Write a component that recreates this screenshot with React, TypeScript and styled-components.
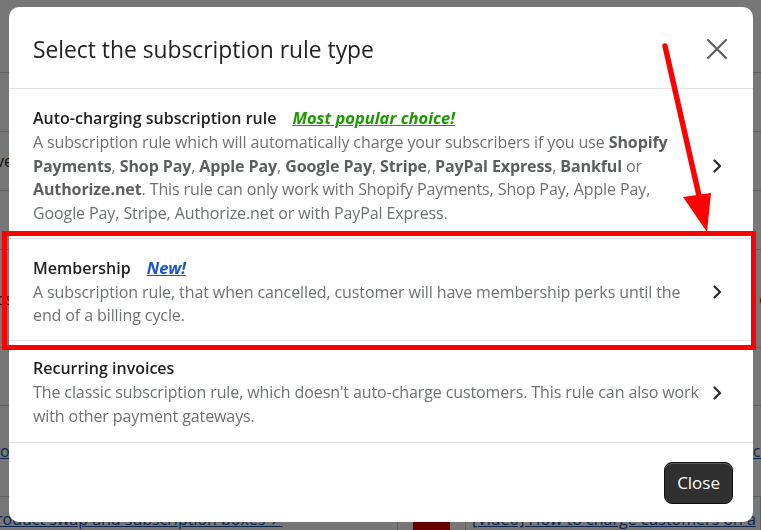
import React from "react";
import styled, { createGlobalStyle } from "styled-components";

const GlobalStyle = createGlobalStyle`
  html, body {
    margin: 0;
    padding: 0;
  }
  body {
    font-family: "Open Sans", "Noto Sans", Arial, sans-serif;
    -webkit-font-smoothing: antialiased;
  }
`;

interface Rule {
  title: string;
  tag?: { text: string; tone: "green" | "blue" };
  body: React.ReactNode;
}

const rules: Rule[] = [
  {
    title: "Auto-charging subscription rule",
    tag: { text: "Most popular choice!", tone: "green" },
    body: (
      <>
        A subscription rule which will automatically charge your subscribers if
        you use <b>Shopify Payments</b>, <b>Shop Pay</b>, <b>Apple Pay</b>,{" "}
        <b>Google Pay</b>, <b>Stripe</b>, <b>PayPal Express</b>,{" "}
        <b>Bankful</b> or <b>Authorize.net</b>. This rule can only work with
        Shopify Payments, Shop Pay, Apple Pay, Google Pay, Stripe,
        Authorize.net or with PayPal Express.
      </>
    ),
  },
  {
    title: "Membership",
    tag: { text: "New!", tone: "blue" },
    body: (
      <>
        A subscription rule, that when cancelled, customer will have membership
        perks until the end of a billing cycle.
      </>
    ),
  },
  {
    title: "Recurring invoices",
    body: (
      <>
        The classic subscription rule, which doesn't auto-charge customers.
        This rule can also work with other payment gateways.
      </>
    ),
  },
];

const ChevronIcon = () => (
  <svg width="12" height="16" viewBox="0 0 12 16" fill="none">
    <path
      d="M3.5 2.5 L9 8 L3.5 13.5"
      stroke="#303030"
      strokeWidth="2.4"
      strokeLinecap="round"
      strokeLinejoin="round"
    />
  </svg>
);

const CloseIcon = () => (
  <svg width="22" height="22" viewBox="0 0 22 22" fill="none">
    <path
      d="M2 2 L20 20 M20 2 L2 20"
      stroke="#5c5f62"
      strokeWidth="2.2"
      strokeLinecap="round"
    />
  </svg>
);

const App = () => {
  return (
    <>
      <GlobalStyle />
      <Page>
        <PageRow $h={72} />
        <PageRow $h={58} />
        <PageRow $h={58}>
          <PageText>ve</PageText>
        </PageRow>
        <PageRow $h={58} />
        <PageRow $h={97}>
          <PageText>os</PageText>
          <PageSide>c</PageSide>
        </PageRow>
        <PageRow $h={57} />
        <PageRow $h={90}>
          <PageLink>ow</PageLink>
          <PageSide>
            <PageLink>cr</PageLink>
          </PageSide>
        </PageRow>
        <PageFooter>
          <FooterCell>
            <PageLink>roduct swap and subscription boxes ↗</PageLink>
          </FooterCell>
          <FooterCell $center>
            <VideoThumb />
          </FooterCell>
          <FooterCell>
            <PageLink>[Video] How to charge customers on a</PageLink>
          </FooterCell>
        </PageFooter>
      </Page>

      <Overlay>
        <Modal>
          <Header>
            <Title>Select the subscription rule type</Title>
            <IconButton aria-label="Close">
              <CloseIcon />
            </IconButton>
          </Header>

          <List>
            {rules.map((rule) => (
              <Item key={rule.title}>
                <ItemText>
                  <ItemTitle>
                    {rule.title}
                    {rule.tag && (
                      <Tag $tone={rule.tag.tone}>{rule.tag.text}</Tag>
                    )}
                  </ItemTitle>
                  <ItemBody>{rule.body}</ItemBody>
                </ItemText>
                <Chevron>
                  <ChevronIcon />
                </Chevron>
              </Item>
            ))}
          </List>

          <Footer>
            <CloseButton>Close</CloseButton>
          </Footer>
        </Modal>
      </Overlay>

      <Annotation width="761" height="530" viewBox="0 0 761 530">
        <rect
          x="4.5"
          y="233.5"
          width="749"
          height="114"
          fill="none"
          stroke="#ff0000"
          strokeWidth="5"
        />
        <line
          x1="665"
          y1="46"
          x2="700"
          y2="200"
          stroke="#ff0000"
          strokeWidth="5.5"
          strokeLinecap="round"
        />
        <polygon points="683,197 711,193 707,232" fill="#ff0000" />
      </Annotation>
    </>
  );
};

export default App;

const Page = styled.div`
  width: 761px;
  height: 530px;
  overflow: hidden;
  background: #ffffff;
  display: flex;
  flex-direction: column;
`;

const PageRow = styled.div<{ $h: number }>`
  height: ${(p) => p.$h}px;
  flex: none;
  border-bottom: 1px solid #c9cccf;
  display: flex;
  align-items: center;
  font-size: 16px;
  color: #202223;
`;

const PageText = styled.span`
  margin-left: -4px;
`;

const PageSide = styled.span`
  margin-left: auto;
  margin-right: -6px;
`;

const PageLink = styled.span`
  color: #1f4fa8;
  text-decoration: underline;
  font-size: 16px;
  white-space: nowrap;
`;

const PageFooter = styled.div`
  flex: 1;
  display: grid;
  grid-template-columns: 408px 68px 1fr;
  margin-left: -10px;
`;

const FooterCell = styled.div<{ $center?: boolean }>`
  display: flex;
  align-items: flex-end;
  justify-content: ${(p) => (p.$center ? "center" : "flex-start")};
  padding: 0 6px;
  border-right: 1px solid #c9cccf;
  overflow: hidden;
`;

const VideoThumb = styled.div`
  width: 37px;
  height: 26px;
  background: #e00000;
  flex: none;
  margin-bottom: -6px;
`;

const Overlay = styled.div`
  position: fixed;
  inset: 0;
  background: rgba(0, 0, 0, 0.535);
  display: flex;
  padding: 7px 8px 8px 9px;
  box-sizing: border-box;
`;

const Modal = styled.div`
  flex: 1;
  background: #ffffff;
  border-radius: 10px;
  display: flex;
  flex-direction: column;
  overflow: hidden;
`;

const Header = styled.div`
  height: 82px;
  flex: none;
  box-sizing: border-box;
  display: flex;
  align-items: center;
  justify-content: space-between;
  padding: 3px 25px 0 24px;
  border-bottom: 1px solid #e1e3e5;
`;

const Title = styled.h2`
  margin: 0;
  font-size: 22.8px;
  font-weight: 400;
  color: #202223;
`;

const IconButton = styled.button`
  border: none;
  background: transparent;
  padding: 0;
  display: flex;
  cursor: pointer;
`;

const List = styled.div`
  display: flex;
  flex-direction: column;
`;

const Item = styled.div`
  display: flex;
  align-items: center;
  gap: 7px;
  padding: 18px 30px 12px 24px;
  border-bottom: 1px solid #e1e3e5;
  cursor: pointer;

  &:last-child {
    padding-top: 16px;
    padding-bottom: 14px;
  }
`;

const ItemText = styled.div`
  flex: 1;
  font-size: 16px;
  line-height: 23.75px;
`;

const ItemTitle = styled.div`
  font-weight: 600;
  color: #202223;
  height: 23.75px;
`;

const Tag = styled.a<{ $tone: "green" | "blue" }>`
  margin-left: 16px;
  font-size: 16.5px;
  line-height: 1;
  font-style: italic;
  font-weight: 700;
  text-decoration: underline;
  color: ${(p) => (p.$tone === "green" ? "#1d9a00" : "#1a55c7")};
`;

const ItemBody = styled.div`
  color: #6d7175;
  letter-spacing: -0.1px;

  b {
    font-weight: 700;
    color: #5c5f62;
  }
`;

const Chevron = styled.div`
  flex: none;
  display: flex;
`;

const Footer = styled.div`
  flex: 1;
  display: flex;
  align-items: center;
  justify-content: flex-end;
  padding: 0 20px;
`;

const CloseButton = styled.button`
  height: 42px;
  padding: 0 12px;
  border-radius: 8px;
  border: 1px solid #111111;
  background: #303030;
  box-shadow: inset 0 1px 0 rgba(255, 255, 255, 0.2);
  color: #ffffff;
  font-family: "Open Sans", "Noto Sans", Arial, sans-serif;
  font-size: 17px;
  cursor: pointer;
`;

const Annotation = styled.svg`
  position: fixed;
  left: 0;
  top: 0;
  pointer-events: none;
`;
